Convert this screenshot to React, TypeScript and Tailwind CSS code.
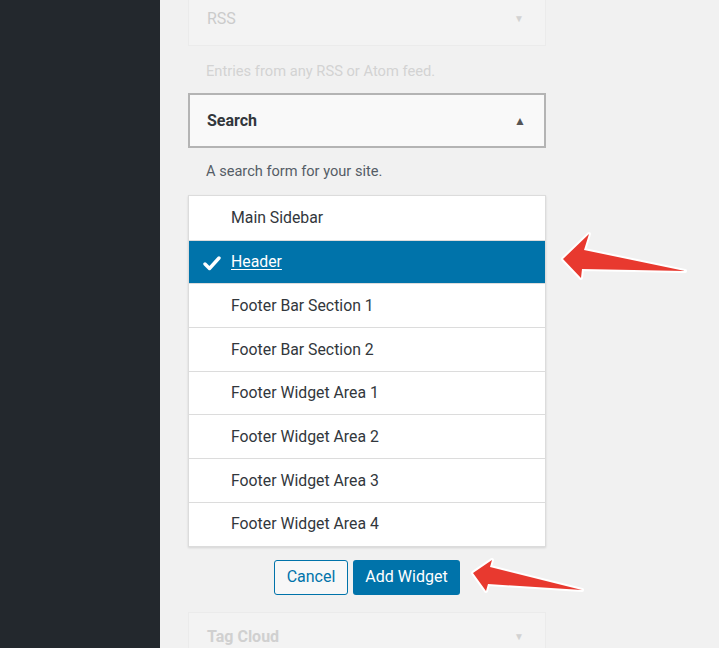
import React from 'react';

const areas = [
  'Main Sidebar',
  'Header',
  'Footer Bar Section 1',
  'Footer Bar Section 2',
  'Footer Widget Area 1',
  'Footer Widget Area 2',
  'Footer Widget Area 3',
  'Footer Widget Area 4',
];

const Arrow: React.FC<{ className: string; d: string; w: number; h: number }> = ({ className, d, w, h }) => (
  <svg className={className} width={w} height={h} viewBox={`0 0 ${w} ${h}`}>
    <path d={d} fill="#e8392f" stroke="#ffffff" strokeWidth="4" strokeLinejoin="round" paintOrder="stroke" />
  </svg>
);

const App: React.FC = () => {
  return (
    <div className="relative flex w-[719px] h-[648px] overflow-hidden font-['Roboto',sans-serif]">
      {/* admin sidebar */}
      <div className="w-[160px] shrink-0 bg-[#23282d]" />

      <div className="flex-1 bg-[#f1f1f1] pl-[28px]">
        <div className="w-[358px] flex flex-col">
          {/* faded RSS widget */}
          <div className="h-[46px] flex items-center justify-between pl-[18px] pr-[21px] pb-[8px] bg-[#f3f3f3] border border-t-0 border-[#ebebeb]">
            <span className="text-[16px] text-[#cbcbcb]">RSS</span>
            <span className="text-[10px] text-[#d2d2d2]">▼</span>
          </div>
          <p className="h-[47px] pt-[14px] pl-[18px] text-[14.7px] text-[#d3d3d3]">Entries from any RSS or Atom feed.</p>

          {/* Search widget */}
          <div className="h-[55px] flex items-center justify-between pl-[17px] pr-[18px] bg-[#f9f9f9] border-2 border-[#b4b4b4]">
            <span className="text-[16px] font-bold text-[#32373c]">Search</span>
            <span className="text-[12px] text-[#555]">▲</span>
          </div>
          <p className="h-[47px] pt-[13px] pl-[18px] text-[14.6px] text-[#555d66]">A search form for your site.</p>

          {/* area chooser */}
          <ul className="bg-white border border-[#dcdcdc] shadow-[0_1px_2px_rgba(0,0,0,0.12)]">
            {areas.map((a, i) => {
              const on = a === 'Header';
              return (
                <li
                  key={a}
                  className={
                    'h-[43.7px] flex items-center pl-[42px] relative text-[15.8px] ' +
                    (i > 0 ? 'border-t border-[#dcdcdc] ' : '') +
                    (on ? 'bg-[#0073aa] text-white' : 'text-[#32373c]')
                  }
                >
                  {on && (
                    <svg className="absolute left-[14px] top-[15px]" width="18" height="15" viewBox="0 0 18 15">
                      <path d="M2 8 L6.5 12.5 L16 2" fill="none" stroke="#fff" strokeWidth="3.4" strokeLinecap="round" strokeLinejoin="round" />
                    </svg>
                  )}
                  <span className={on ? 'underline underline-offset-2' : ''}>{a}</span>
                </li>
              );
            })}
          </ul>

          <div className="flex justify-center gap-[5px] mt-[13px]">
            <button className="w-[74px] h-[35px] rounded-[3px] border border-[#0073aa] bg-[#f7f7f7] text-[16px] text-[#0073aa]">Cancel</button>
            <button className="w-[107px] h-[35px] rounded-[3px] bg-[#0073aa] text-[16px] text-white">Add Widget</button>
          </div>

          {/* faded Tag Cloud widget */}
          <div className="mt-[17px] h-[50px] flex items-center justify-between pl-[18px] pr-[21px] bg-[#f3f3f3] border border-[#ebebeb]">
            <span className="text-[16px] font-bold text-[#d0d0d0]">Tag Cloud</span>
            <span className="text-[10px] text-[#d2d2d2]">▼</span>
          </div>
        </div>
      </div>

      {/* annotation arrows */}
      <Arrow
        className="absolute left-[556px] top-[228px]"
        w={134}
        h={56}
        d="M7 31 L33 6 L28 22 L129 43 L26 41 L25 50 Z"
      />
      <Arrow
        className="absolute left-[468px] top-[554px]"
        w={120}
        h={42}
        d="M5 19 L24 6 L22 13 L114 36 L20 30 L18 37 Z"
      />
    </div>
  );
};

export default App;
